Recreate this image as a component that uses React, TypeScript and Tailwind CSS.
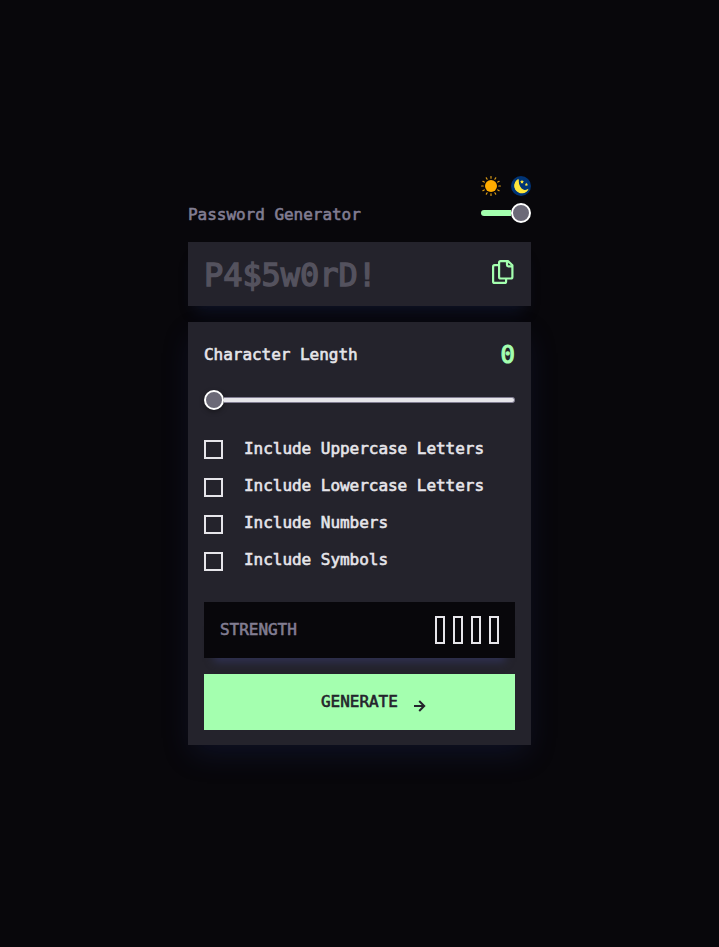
import { useState } from "react";

const options = [
  { label: "Include Uppercase Letters", gap: "mb-[19px]", lift: "-mt-[3px]" },
  { label: "Include Lowercase Letters", gap: "mb-[18px]", lift: "-mt-[5px]" },
  { label: "Include Numbers", gap: "mb-[18px]", lift: "-mt-[5px]" },
  { label: "Include Symbols", gap: "", lift: "-mt-[5px]" },
];

const rays = [0, 30, 60, 90, 120, 150, 180, 210, 240, 270, 300, 330];

function Sun() {
  return (
    <svg width="20" height="20" viewBox="0 0 20 20">
      <circle cx="10" cy="10" r="6" fill="#ffac00" />
      {rays.map((angle) => (
        <path
          key={angle}
          d="M10 0.6V2.2"
          stroke="#d99a16"
          strokeWidth="1.2"
          strokeLinecap="round"
          transform={`rotate(${angle} 10 10)`}
        />
      ))}
    </svg>
  );
}

function Moon() {
  return (
    <svg width="20" height="20" viewBox="0 0 20 20">
      <circle cx="10" cy="10" r="10" fill="#003476" />
      <path d="M7.6 2.8A7.5 7.5 0 1 0 17.6 13A6.4 6.4 0 0 1 7.6 2.8Z" fill="#ffe63b" />
      <path d="M8 3.2A7.3 7.3 0 1 0 17.4 12.8A5.4 5.4 0 0 1 9.2 10.6Q7.3 7.4 8 3.2Z" fill="#ffe63b" />
      <path d="M11 3.8l.6 1.2 1.3.2-.9 1 .2 1.3-1.2-.6-1.2.6.2-1.3-.9-1 1.3-.2Z" fill="#ffe63b" />
      <path d="M15.4 6.8l.5 1 1.1.2-.8.8.2 1.1-1-.5-1 .5.2-1.1-.8-.8 1.1-.2Z" fill="#ffe63b" />
    </svg>
  );
}

function CopyIcon() {
  return (
    <svg width="22" height="24" viewBox="0 0 22 24" fill="none" stroke="#a4ffaf" strokeWidth="2.2" strokeLinejoin="round">
      <path d="M7 5.2H2.6Q1.1 5.2 1.1 6.7V21.4Q1.1 22.9 2.6 22.9H12.6Q14.1 22.9 14.1 21.4V19" />
      <path d="M8.6 1.1H16L20.4 5.2V17Q20.4 18.5 18.9 18.5H8.6Q7.1 18.5 7.1 17V2.6Q7.1 1.1 8.6 1.1Z" />
      <path d="M15 1.1V5Q15 6.3 16.3 6.3H20.4" />
    </svg>
  );
}

export default function App() {
  const [checked, setChecked] = useState([false, false, false, false]);

  return (
    <main className="flex h-[947px] justify-center overflow-hidden bg-[#08070b] pt-[176px] font-['DejaVu_Sans_Mono',monospace] text-[16px] leading-[21px] font-normal tracking-[-0.032px] text-[#e6e5ea] [-webkit-text-stroke:0.6px_currentColor]">
      <div className="w-[343px]">
        <header className="flex h-[66px] justify-between">
          <h1 className="pt-[28px] text-[#817d92]">Password Generator</h1>
          <div className="w-[50px]">
            <div className="flex justify-between"><Sun /><Moon /></div>
            <div className="mt-[6.5px] flex h-5 items-center">
              <span className="h-[6px] w-[30px] rounded-l-full bg-[#a4ffaf]" />
              <span className="size-5 shrink-0 rounded-full border-2 border-white bg-[#6b6977]" />
            </div>
          </div>
        </header>

        <section className="flex h-16 items-center justify-between bg-[#24232c] px-4 shadow-[0_12px_16px_-8px_rgba(30,45,100,0.35)]">
          <span className="pt-[2px] text-[32px] leading-[42px] tracking-[-0.064px] text-[#54525e] [-webkit-text-stroke:1.4px_currentColor]">P4$5w0rD!</span>
          <span className="-mt-1 mr-px"><CopyIcon /></span>
        </section>

        <section className="relative mt-4 h-[423px] bg-[#24232c] px-4 pt-4 shadow-[0_12px_28px_-5px_rgba(30,45,100,0.32)]">
          <div className="flex h-8 items-center justify-between">
            <span>Character Length</span>
            <span className="pt-[2px] text-[24px] text-[#a4ffaf] [-webkit-text-stroke:1.1px_currentColor]">0</span>
          </div>
          <div className="mt-5 flex h-5 items-center">
            <span className="size-5 shrink-0 rounded-full border-2 border-white bg-[#6b6977] shadow-[0_2px_5px_rgba(0,0,0,0.35)]" />
            <span className="h-[6px] grow rounded-r-full border border-l-0 border-[#817d92] bg-[#e6e5ea]" />
          </div>

          <div className="mt-[30px]">
            {options.map(({ label, gap, lift }, index) => (
              <label key={label} className={`flex h-[19px] items-center ${gap}`}>
                <input
                  type="checkbox"
                  checked={checked[index]}
                  onChange={() => setChecked(checked.map((value, i) => (i === index ? !value : value)))}
                  className="m-0 size-[19px] appearance-none border-2 border-[#e6e5ea] checked:bg-[#a4ffaf]"
                />
                <span className={`ml-[21px] ${lift}`}>{label}</span>
              </label>
            ))}
          </div>

          <div className="mt-[31px] flex h-14 items-center justify-between bg-[#08070b] px-4 shadow-[0_14px_8px_-10px_#2f3152]">
            <span className="pb-[2px] text-[#817d92]">STRENGTH</span>
            <div className="flex gap-2">
              <span className="h-7 w-[10px] border-2 border-[#e6e5ea]" />
              <span className="h-7 w-[10px] border-2 border-[#e6e5ea]" />
              <span className="h-7 w-[10px] border-2 border-[#e6e5ea]" />
              <span className="h-7 w-[10px] border-2 border-[#e6e5ea]" />
            </div>
          </div>
          <button className="mt-4 flex h-14 w-full items-center bg-[#a4ffaf] pl-[117px] text-[#24232c]">
            <span className="pb-[2px]">GENERATE</span>
            <svg className="mt-2 ml-4" width="12" height="12" viewBox="0 0 12 12" fill="none" stroke="currentColor" strokeWidth="2">
              <path d="M0 6H10M5.2 1L10.2 6L5.2 11" />
            </svg>
          </button>
        </section>
      </div>
    </main>
  );
}
